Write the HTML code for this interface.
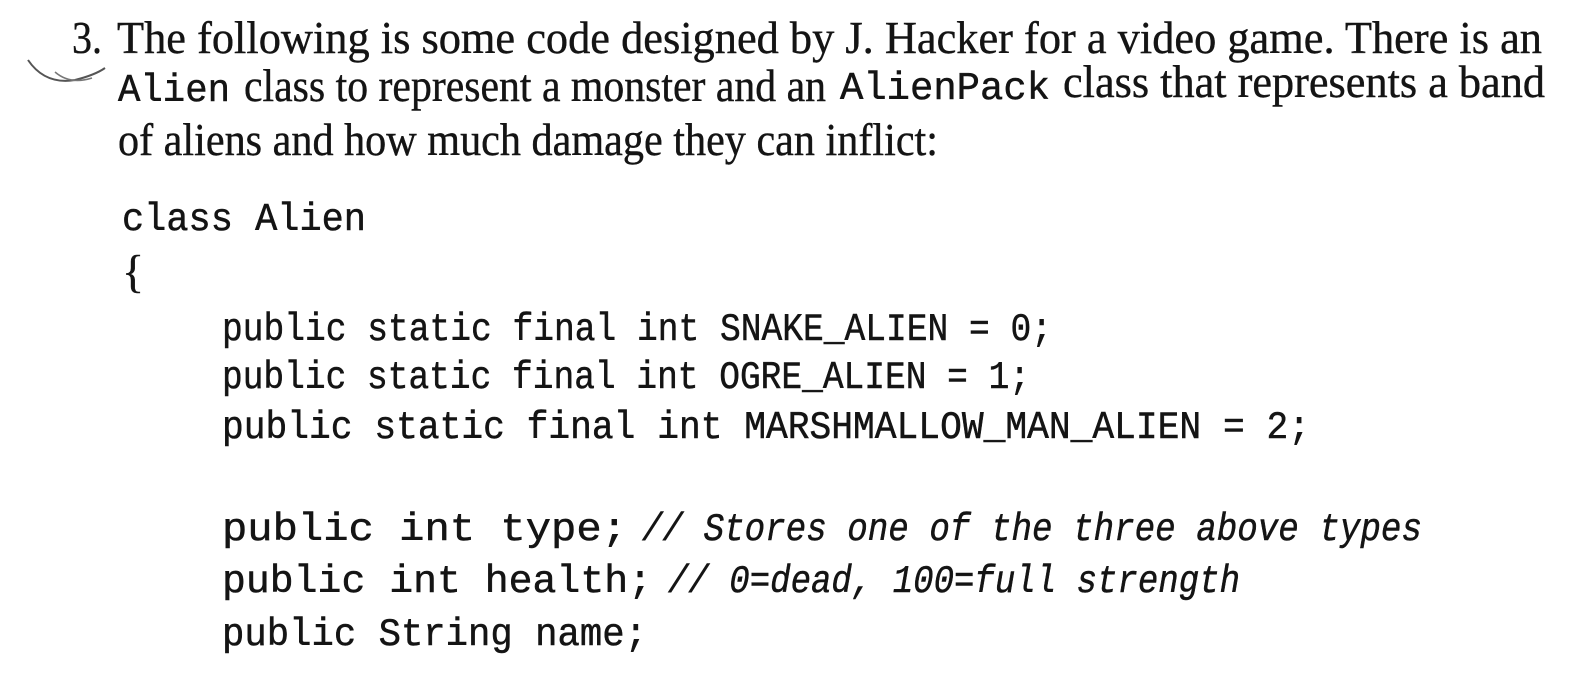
<!DOCTYPE html>
<html><head><meta charset="utf-8"><style>
html,body{margin:0;padding:0;background:#fff;}
svg{display:block}
.s{font-family:"Liberation Serif",serif;font-size:46px;fill:#141414;stroke:#141414;stroke-width:0.4;}
.m{font-family:"Liberation Mono",monospace;font-size:39px;fill:#141414;stroke:#141414;stroke-width:0.5;}
.i{font-style:italic}
</style></head><body>
<svg width="1596" height="700" viewBox="0 0 1596 700" xmlns="http://www.w3.org/2000/svg">
<path d="M28 60 Q45 85 75 80 Q95 75 105 68" stroke="#555" stroke-width="2" fill="none"/>
<path d="M55 72 Q70 85 92 78" stroke="#777" stroke-width="1.5" fill="none"/>
<text class="s" x="72" y="53" textLength="30" lengthAdjust="spacingAndGlyphs">3.</text>
<text class="s" x="117" y="53" textLength="1425" lengthAdjust="spacingAndGlyphs">The following is some code designed by J. Hacker for a video game. There is an</text>
<text class="m" x="118" y="101" font-size="31" textLength="112" lengthAdjust="spacingAndGlyphs">Alien</text>
<text class="s" x="244" y="101" textLength="582" lengthAdjust="spacingAndGlyphs">class to represent a monster and an</text>
<text class="m" x="840" y="99" font-size="31" textLength="210" lengthAdjust="spacingAndGlyphs">AlienPack</text>
<text class="s" x="1063" y="97" textLength="482" lengthAdjust="spacingAndGlyphs">class that represents a band</text>
<text class="s" x="118" y="155" textLength="820" lengthAdjust="spacingAndGlyphs">of aliens and how much damage they can inflict:</text>
<text class="m" x="122" y="230" textLength="244" lengthAdjust="spacingAndGlyphs">class Alien</text>
<text class="s" x="122" y="287">{</text>
<text class="m" x="222" y="340" textLength="830" lengthAdjust="spacingAndGlyphs">public static final int SNAKE_ALIEN = 0;</text>
<text class="m" x="222" y="388" textLength="808" lengthAdjust="spacingAndGlyphs">public static final int OGRE_ALIEN = 1;</text>
<text class="m" x="222" y="438" textLength="1088" lengthAdjust="spacingAndGlyphs">public static final int MARSHMALLOW_MAN_ALIEN = 2;</text>
<text class="m" x="222" y="540" textLength="405" lengthAdjust="spacingAndGlyphs">public int type;</text>
<text class="m i" x="642" y="540" textLength="780" lengthAdjust="spacingAndGlyphs">// Stores one of the three above types</text>
<text class="m" x="222" y="592" textLength="430" lengthAdjust="spacingAndGlyphs">public int health;</text>
<text class="m i" x="668" y="592" textLength="572" lengthAdjust="spacingAndGlyphs">// 0=dead, 100=full strength</text>
<text class="m" x="222" y="645" textLength="425" lengthAdjust="spacingAndGlyphs">public String name;</text>
</svg>
</body></html>
